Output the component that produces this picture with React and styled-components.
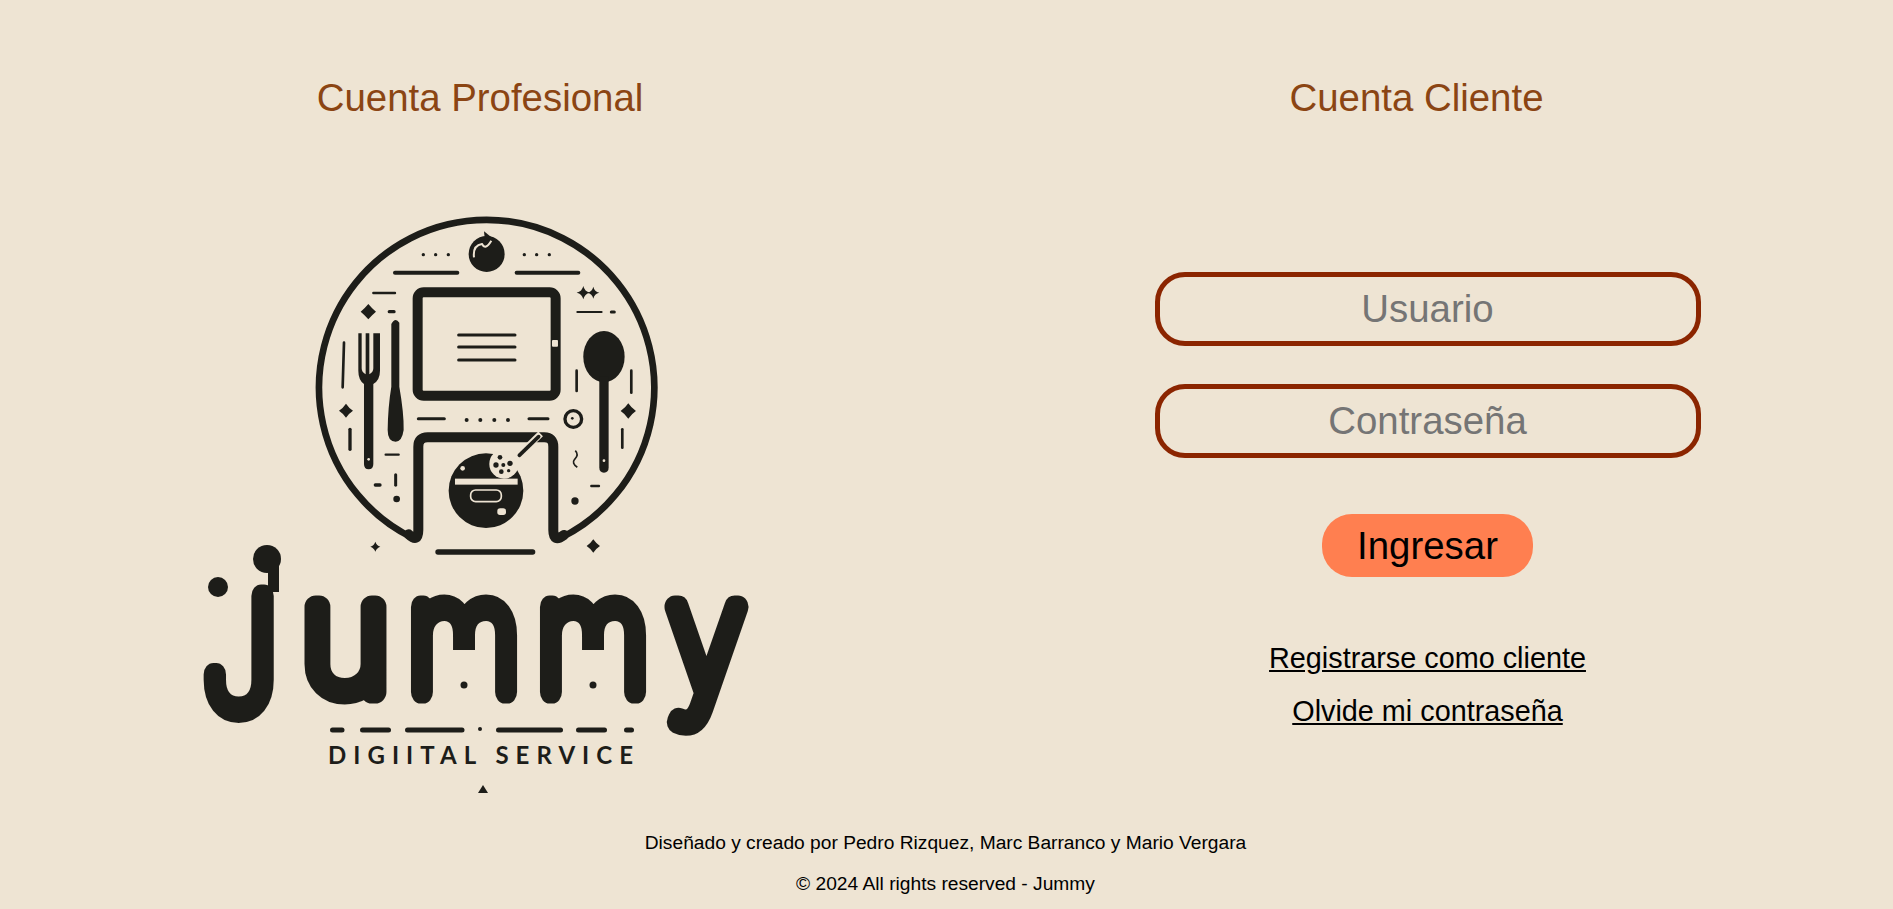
import React from 'react'
import styled, { createGlobalStyle } from 'styled-components'

const GlobalStyle = createGlobalStyle`
  html, body {
    margin: 0;
    background: #eee4d3;
    font-family: "Liberation Sans", Arial, sans-serif;
    color: #000;
  }
`

const INK = '#1d1d19'
const PAPER = '#eee4d3'

// four pointed star used all over the badge
const star = (x, y, r, k = 0.22) =>
  `M${x} ${y - r}Q${x + r * k} ${y - r * k} ${x + r} ${y}Q${x + r * k} ${y + r * k} ${x} ${y + r}Q${x - r * k} ${y + r * k} ${x - r} ${y}Q${x - r * k} ${y - r * k} ${x} ${y - r}Z`

const lines = [
  [285, 218, 472, 218, 12], [650, 218, 835, 218, 12],
  [220, 279, 285, 279, 7], [268, 335, 282, 335, 10],
  [132, 428, 128, 562, 8], [150, 688, 150, 748, 10],
  [257, 764, 296, 764, 7], [226, 855, 240, 855, 10],
  [287, 824, 287, 856, 9],
  [355, 656, 433, 656, 9], [687, 656, 744, 656, 9],
  [476, 405, 645, 405, 9], [476, 441, 645, 441, 9], [476, 480, 645, 480, 9],
  [832, 336, 905, 336, 6], [934, 336, 943, 336, 9],
  [830, 512, 830, 573, 8], [994, 512, 994, 578, 8],
  [967, 688, 967, 743, 8], [874, 858, 897, 858, 7],
  [414, 1056, 698, 1056, 16],
]

const dots = [
  [370, 164, 5], [407, 164, 5], [445, 164, 5],
  [673, 164, 5], [710, 164, 5], [748, 164, 5],
  [500, 660, 6], [541, 660, 6], [583, 660, 6], [624, 660, 6],
  [290, 897, 10], [825, 903, 11],
]

const stars = [
  [205, 335, 23, 0.45], [138, 632, 21, 0.4], [985, 633, 23, 0.4],
  [850, 278, 20, 0.18], [880, 278, 18, 0.18],
  [226, 1040, 15, 0.25], [880, 1038, 20, 0.4],
]

const dashes = [
  [332.5, 342], [362.5, 388.5], [407.5, 462], [498.5, 560.5], [578.5, 604.5], [626.5, 631.5],
]

const letters = [
  { ch: 'J', x: 203, y: 710, w: 74, size: 157 },
  { ch: 'u', x: 301, y: 692, w: 89 },
  { ch: 'm', x: 408, y: 692, w: 112 },
  { ch: 'm', x: 537, y: 692, w: 112 },
  { ch: 'y', x: 668, y: 692, w: 77 },
]

const Logo = () => (
  <LogoArt viewBox="190 200 580 593" role="img" aria-label="Jummy">
    <g transform="translate(300 200) scale(0.3333)">
      <Ring d="M340 1015A503 503 0 1 1 780 1015" />
      <Door d="M326 1003Q355 1030 355 990L355 740Q355 712 383 712L733 712Q760 712 760 740L760 990Q760 1030 792 1005" />
      <rect x="353" y="277" width="414" height="310" rx="18" fill="none" stroke={INK} strokeWidth="30" />
      <rect x="756" y="420" width="18" height="20" rx="3" fill={PAPER} />

      {/* tomato */}
      <circle cx="560" cy="162" r="54" fill={INK} />
      <path d="M552 94L580 116L555 122Z" fill={INK} />
      <path d="M522 172Q518 136 546 132Q556 152 574 122" fill="none" stroke={PAPER} strokeWidth="6" />

      {lines.map(([x1, y1, x2, y2, w], i) => (
        <line key={i} x1={x1} y1={y1} x2={x2} y2={y2} stroke={INK} strokeWidth={w} strokeLinecap="round" />
      ))}
      {dots.map(([cx, cy, r], i) => <circle key={i} cx={cx} cy={cy} r={r} fill={INK} />)}
      {stars.map(([x, y, r, k], i) => <path key={i} d={star(x, y, r, k)} fill={INK} />)}

      {/* fork */}
      <path d="M175 400h10v105q0 12 12 18v-123h11v123q12-6 12-18v-105h10q10 0 10 0v112q0 28-20 40v240q0 16-14 16t-14-16v-240q-17-12-17-40z" fill={INK} />
      <circle cx="206" cy="778" r="4" fill={PAPER} />

      {/* knife */}
      <path d="M274 372Q286 350 298 368L298 560Q312 640 311 690Q306 725 287 725Q263 725 263 690Q264 620 274 560Z" fill={INK} />

      {/* spoon */}
      <ellipse cx="912" cy="470" rx="62" ry="77" fill={INK} />
      <path d="M898 530h28v272q0 16-14 16t-14-16z" fill={INK} />
      <circle cx="912" cy="782" r="4" fill={PAPER} />

      {/* button */}
      <circle cx="820" cy="657" r="25" fill="none" stroke={INK} strokeWidth="10" />
      <circle cx="817" cy="655" r="4" fill={INK} />
      <path d="M826 752Q838 765 824 778Q814 790 832 802" fill="none" stroke={INK} strokeWidth="5" />

      {/* bowl and ladle */}
      <circle cx="558" cy="872" r="112" fill={INK} />
      <rect x="465" y="836" width="188" height="18" fill={PAPER} />
      <rect x="512" y="870" width="92" height="35" rx="15" fill="none" stroke={PAPER} strokeWidth="5" />
      <rect x="592" y="925" width="26" height="20" rx="8" fill={PAPER} />
      <circle cx="488" cy="805" r="7" fill={PAPER} />
      <circle cx="612" cy="792" r="44" fill={PAPER} />
      <path d="M650 772L722 702" stroke={PAPER} strokeWidth="20" />
      <path d="M658 766L716 710" stroke={INK} strokeWidth="11" strokeLinecap="round" />
      <circle cx="600" cy="772" r="7" fill={INK} />
      <circle cx="588" cy="795" r="8" fill={INK} />
      <circle cx="610" cy="795" r="6" fill={INK} />
      <circle cx="630" cy="790" r="8" fill={INK} />
      <circle cx="604" cy="815" r="7" fill={INK} />
      <circle cx="626" cy="812" r="5" fill={INK} />
    </g>

    {letters.map((l, i) => (
      <WordLetter key={i} x={l.x} y={l.y} fontSize={l.size || 156} textLength={l.w} lengthAdjust="spacingAndGlyphs">
        {l.ch}
      </WordLetter>
    ))}
    {/* ball on top of the J and its dot */}
    <circle cx="267" cy="559" r="14" fill={INK} />
    <rect x="268" y="560" width="11" height="32" fill={INK} />
    <circle cx="218" cy="587" r="10" fill={INK} />
    {/* the m's middle leg stops short, with a dot under it */}
    <rect x="435" y="650" width="57" height="60" fill={PAPER} />
    <rect x="564" y="650" width="57" height="60" fill={PAPER} />
    <circle cx="464" cy="685" r="3.5" fill={INK} />
    <circle cx="593" cy="685" r="3.5" fill={INK} />

    {dashes.map(([a, b], i) => (
      <line key={i} x1={a} y1="730" x2={b} y2="730" stroke={INK} strokeWidth="5" strokeLinecap="round" />
    ))}
    <circle cx="480" cy="729" r="2" fill={INK} />
    <Tagline x="328" y="764" textLength="305" fontSize="24">DIGIITAL SERVICE</Tagline>
    <path d="M478 793L483 785L488 793Z" fill={INK} />
  </LogoArt>
)

const App = () => (
  <>
    <GlobalStyle />
    <Page>
      <Columns>
        <Column>
          <Title>Cuenta Profesional</Title>
          <LogoBox>
            <Logo />
          </LogoBox>
        </Column>
        <Column>
          <Title $shift>Cuenta Cliente</Title>
          <LoginForm onSubmit={(e) => e.preventDefault()}>
            <Field type="text" placeholder="Usuario" />
            <Field type="password" placeholder="Contraseña" />
            <Submit type="submit">Ingresar</Submit>
            <FormLink href="#">Registrarse como cliente</FormLink>
            <FormLink href="#">Olvide mi contraseña</FormLink>
          </LoginForm>
        </Column>
      </Columns>
      <Footer>
        <p>Diseñado y creado por Pedro Rizquez, Marc Barranco y Mario Vergara</p>
        <p>© 2024 All rights reserved - Jummy</p>
      </Footer>
    </Page>
  </>
)

export default App

const Page = styled.div`
  height: 909px;
  overflow: hidden;
  display: flex;
  flex-direction: column;
`
const Columns = styled.main`
  display: grid;
  grid-template-columns: 960px 1fr;
  height: 793px;
`
const Column = styled.section`
  display: flex;
  flex-direction: column;
  align-items: center;
  padding-top: 76px;
`
const Title = styled.h2`
  margin: 0;
  font-size: 38.4px;
  line-height: 44px;
  font-weight: 400;
  color: #8b4513;
  transform: translateX(${(p) => (p.$shift ? '-10px' : '0')});
`
const LogoBox = styled.div`
  margin-top: 80px;
  height: 593px;
  display: flex;
  justify-content: center;
`
const LogoArt = styled.svg`
  display: block;
  width: 580px;
  height: 593px;
`
const Ring = styled.path`
  fill: none;
  stroke: ${INK};
  stroke-width: 20;
`
const Door = styled.path`
  fill: none;
  stroke: ${INK};
  stroke-width: 30;
  stroke-linecap: round;
`
const WordLetter = styled.text`
  font-family: "Inter", sans-serif;
  font-weight: 100;
  fill: ${INK};
  stroke: ${INK};
  stroke-width: 23;
  stroke-linejoin: round;
  stroke-linecap: round;
`
const Tagline = styled.text`
  font-family: "Lato", sans-serif;
  font-weight: 700;
  fill: ${INK};
`
const LoginForm = styled.form`
  margin-top: 152px;
  width: 546px;
  display: flex;
  flex-direction: column;
  align-items: center;
  transform: translateX(1px);
`
const Field = styled.input`
  box-sizing: border-box;
  width: 100%;
  height: 74px;
  margin-bottom: 38px;
  border: 5px solid #8b2500;
  border-radius: 30px;
  background: transparent;
  font-family: inherit;
  font-size: 38.4px;
  text-align: center;
  outline: none;

  &::placeholder {
    color: #757575;
  }
`
const Submit = styled.button`
  width: 211px;
  height: 63px;
  margin: 18px 0 65px;
  border: none;
  border-radius: 30px;
  background: #ff7f50;
  color: #000;
  font-family: inherit;
  font-size: 38.4px;
`
const FormLink = styled.a`
  font-size: 28.8px;
  line-height: 33px;
  margin-bottom: 20px;
  color: #000;
`
const Footer = styled.footer`
  text-align: center;
  font-size: 19.2px;
  line-height: 22px;
  padding: 39px 2px 0 0;

  p {
    margin: 0 0 19px;
  }
`
